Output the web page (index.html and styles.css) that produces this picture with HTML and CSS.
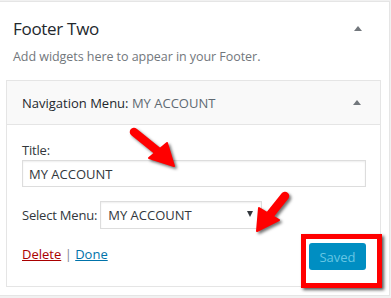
FILE: index.html
```html
<!DOCTYPE html>
<html>
<head>
<meta charset="utf-8">
<link rel="stylesheet" href="styles.css">
</head>
<body>
<div class="sidebar">
  <div class="sidebar-head">
    <h2 class="sidebar-title">Footer Two</h2>
    <span class="toggle"></span>
  </div>
  <p class="sidebar-desc">Add widgets here to appear in your Footer.</p>
  <div class="widget">
    <div class="widget-top">
      <span class="widget-title">Navigation Menu: <span class="in-title">MY ACCOUNT</span></span>
      <span class="toggle"></span>
    </div>
    <div class="widget-inside">
      <label class="field-label">Title:</label>
      <input class="text-input" type="text" value="MY ACCOUNT">
      <div class="select-row">
        <span class="select-label">Select Menu:</span>
        <div class="select-box"><span>MY ACCOUNT</span><span class="caret"></span></div>
      </div>
      <div class="controls">
        <div class="links"><a class="delete" href="#">Delete</a> <span class="sep">|</span> <a class="done" href="#">Done</a></div>
        <div class="save-wrap">
          <span class="button-saved">Saved</span>
          <span class="highlight"></span>
        </div>
      </div>
    </div>
  </div>
</div>
<svg class="arrow arrow-one" width="60" height="50" viewBox="0 0 60 50">
  <line x1="8" y1="7" x2="34" y2="28" />
  <polygon points="23,33 41,18 48,41" />
</svg>
<svg class="arrow arrow-two" width="50" height="50" viewBox="0 0 50 50">
  <line x1="37" y1="8" x2="21" y2="28" />
  <polygon points="11,20 31,32 9,43" />
</svg>
</body>
</html>
```
FILE: styles.css
```css
* { box-sizing: border-box; }
html, body { margin: 0; padding: 0; }
body {
  background: #f1f1f1;
  width: 391px;
  height: 298px;
  overflow: hidden;
  position: relative;
  font-family: "Open Sans", "Noto Sans", sans-serif;
  color: #23282d;
}
.sidebar {
  margin-top: 1px;
  width: 390px;
  height: 295px;
  background: #fff;
  border: 1px solid #e5e5e5;
  border-left: none;
}
.sidebar-head {
  display: flex;
  justify-content: space-between;
  align-items: center;
  height: 45px;
  padding: 8px 27px 0 13px;
}
.sidebar-title {
  margin: 0;
  font-size: 17px;
  font-weight: 400;
  color: #23282d;
  letter-spacing: -0.3px;
}
.toggle {
  width: 0;
  height: 0;
  border-left: 4px solid transparent;
  border-right: 4px solid transparent;
  border-bottom: 5px solid #72777c;
}
.sidebar-desc {
  margin: 0;
  padding: 1px 13px 0;
  height: 33px;
  font-size: 12.5px;
  color: #72777c;
  line-height: 18px;
  letter-spacing: -0.05px;
}
.widget {
  margin: 0 8px 0 6px;
  border: 1px solid #e5e5e5;
  background: #fff;
}
.widget-top {
  display: flex;
  justify-content: space-between;
  align-items: center;
  height: 44px;
  padding: 0 19px 0 15px;
  background: #f9f9f9;
  border-bottom: 1px solid #e5e5e5;
}
.widget-title {
  font-size: 13px;
  color: #23282d;
}
.in-title { color: #606a73; }
.widget-inside {
  padding: 16px 14px 15px 15px;
  font-size: 13px;
  color: #32373c;
}
.field-label {
  display: block;
  line-height: 18px;
  height: 18px;
  letter-spacing: -0.2px;
}
.text-input {
  display: block;
  width: 344px;
  height: 27px;
  margin: 1px 0 0;
  padding: 0 6px;
  border: 1px solid #ddd;
  box-shadow: inset 0 1px 2px rgba(0,0,0,.07);
  font-family: inherit;
  font-size: 13px;
  color: #32373c;
  outline: none;
}
.select-row {
  display: flex;
  align-items: center;
  margin-top: 14px;
  gap: 3px;
}
.select-label { letter-spacing: -0.2px; }
.select-box {
  display: flex;
  justify-content: space-between;
  align-items: center;
  width: 162px;
  height: 28px;
  padding: 0 8px 0 7px;
  border: 1px solid #ddd;
  box-shadow: inset 0 1px 2px rgba(0,0,0,.07);
  background: #fff;
}
.caret {
  width: 0;
  height: 0;
  border-left: 3.5px solid transparent;
  border-right: 3.5px solid transparent;
  border-top: 6px solid #32373c;
  margin-bottom: 2px;
}
.controls {
  display: flex;
  justify-content: space-between;
  align-items: flex-start;
  margin-top: 14px;
}
.links {
  padding-top: 2px;
  font-size: 13px;
}
.delete { color: #a00; }
.done { color: #0073aa; }
.sep { color: #82878c; }
.save-wrap {
  position: relative;
  width: 57px;
  height: 28px;
}
.button-saved {
  display: flex;
  align-items: center;
  justify-content: center;
  width: 57px;
  height: 27px;
  border-radius: 3px;
  background: #008ec2;
  color: #66c6e4;
  font-size: 13px;
}
.highlight {
  position: absolute;
  left: -8px;
  top: -9px;
  width: 81px;
  height: 54px;
  border: 5px solid #f00;
  box-shadow: 2px 2px 3px rgba(0,0,0,.65);
}
.arrow {
  position: absolute;
  filter: drop-shadow(2px 2px 1.5px rgba(0,0,0,.55));
}
.arrow line { stroke: #f00; stroke-width: 8.5; stroke-linecap: round; }
.arrow polygon { fill: #f00; stroke: #f00; stroke-width: 2; stroke-linejoin: round; }
.arrow-one { left: 126px; top: 125px; }
.arrow-two { left: 248px; top: 188px; }
```
